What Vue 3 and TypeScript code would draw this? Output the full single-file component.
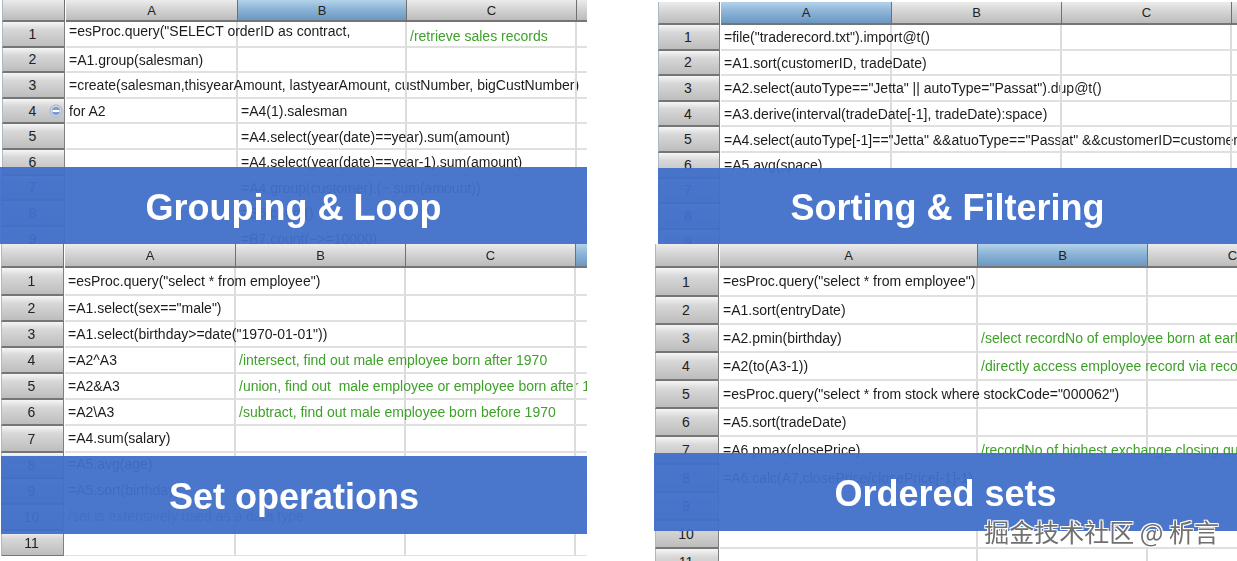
<script setup lang="ts">
interface Cell { text: string; low?: boolean; high?: boolean }
interface Panel {
  id: string
  title: string
  selected: number
  rows: (string | Cell)[][]
  minusRow?: number
}

const heads = ['A', 'B', 'C', '']

const panels: Panel[] = [
  {
    id: 'tl',
    title: 'Grouping & Loop',
    selected: 1,
    minusRow: 4,
    rows: [
      [{ text: '=esProc.query("SELECT orderID as contract,', high: true }, '', { text: '/retrieve sales records', low: true }],
      ['=A1.group(salesman)'],
      ['=create(salesman,thisyearAmount, lastyearAmount, custNumber, bigCustNumber)'],
      ['for A2', '=A4(1).salesman'],
      ['', '=A4.select(year(date)==year).sum(amount)'],
      ['', '=A4.select(year(date)==year-1).sum(amount)'],
      ['', '=A4.group(customer).(~.sum(amount))'],
      ['', '=B6.count()'],
      ['', '=B7.count(~>=10000)'],
    ],
  },
  {
    id: 'tr',
    title: 'Sorting & Filtering',
    selected: 0,
    rows: [
      ['=file("traderecord.txt").import@t()'],
      ['=A1.sort(customerID, tradeDate)'],
      ['=A2.select(autoType=="Jetta" || autoType="Passat").dup@t()'],
      ['=A3.derive(interval(tradeDate[-1], tradeDate):space)'],
      ['=A4.select(autoType[-1]=="Jetta" &&atuoType=="Passat" &&customerID=customerID[-1])'],
      ['=A5.avg(space)'],
      [],
      [],
      [],
    ],
  },
  {
    id: 'bl',
    title: 'Set operations',
    selected: 3,
    rows: [
      ['=esProc.query("select * from employee")'],
      ['=A1.select(sex=="male")'],
      ['=A1.select(birthday>=date("1970-01-01"))'],
      ['=A2^A3', '/intersect, find out male employee born after 1970'],
      ['=A2&A3', '/union, find out  male employee or employee born after 1970'],
      ['=A2\\A3', '/subtract, find out male employee born before 1970'],
      ['=A4.sum(salary)'],
      ['=A5.avg(age)'],
      ['=A5.sort(birthday)'],
      ['/set is extensively used as a data type'],
      [],
    ],
  },
  {
    id: 'br',
    title: 'Ordered sets',
    selected: 1,
    rows: [
      ['=esProc.query("select * from employee")'],
      ['=A1.sort(entryDate)'],
      ['=A2.pmin(birthday)', '/select recordNo of employee born at earliest date'],
      ['=A2(to(A3-1))', '/directly access employee record via recordNo'],
      ['=esProc.query("select * from stock where stockCode="000062")'],
      ['=A5.sort(tradeDate)'],
      ['=A6.pmax(closePrice)', '/recordNo of highest exchange closing quotation'],
      ['=A6.calc(A7,closePrice/closePrice[-1]-1)'],
      [],
      [],
      [],
    ],
  },
]

const cellAt = (row: (string | Cell)[], i: number): Cell => {
  const c = row[i]
  if (c === undefined) return { text: '' }
  return typeof c === 'string' ? { text: c } : c
}
const isNote = (c: Cell) => c.text.startsWith('/')
const find = (id: string) => panels.filter(p => p.id === id)
const columns = [
  [...find('tl'), ...find('bl')],
  [...find('tr'), ...find('br')],
]
</script>

<template>
  <div class="page">
    <div v-for="(col, ci) in columns" :key="ci" class="column">
      <section v-for="p in col" :key="p.id" class="panel" :class="p.id">
        <div class="sheet">
          <div class="head corner"></div>
          <div
            v-for="(h, i) in heads"
            :key="i"
            class="head"
            :class="{ selected: i === p.selected }"
          >{{ h }}</div>
          <template v-for="(row, r) in p.rows" :key="r">
            <div class="rowhead">
              {{ r + 1 }}
              <svg v-if="p.minusRow === r + 1" class="minus" viewBox="0 0 14 14" width="14" height="14">
                <circle cx="7" cy="7" r="6" fill="#c9d6ea" stroke="#9fb2cf" />
                <circle cx="7" cy="7" r="4" fill="#7f9cc8" />
                <rect x="3.5" y="6" width="7" height="2" fill="#fff" />
              </svg>
            </div>
            <div
              v-for="i in 4"
              :key="i"
              class="cell"
              :class="{ note: isNote(cellAt(row, i - 1)), low: cellAt(row, i - 1).low, high: cellAt(row, i - 1).high }"
            >{{ cellAt(row, i - 1).text }}</div>
          </template>
        </div>
        <div class="banner"><h2>{{ p.title }}</h2></div>
      </section>
    </div>
    <div class="watermark">掘金技术社区 @ 析言</div>
  </div>
</template>

<style scoped>
.page {
  position: relative;
  display: flex;
  width: 1237px;
  height: 561px;
  overflow: hidden;
  background: #fff;
  font-family: "Liberation Sans", Arial, sans-serif;
}
.column {
  display: flex;
  flex-direction: column;
}
.column:first-child {
  width: 654px;
}
.column:last-child {
  width: 583px;
}
.panel {
  position: relative;
  overflow: hidden;
  flex: none;
}
.tl, .tr {
  height: 244px;
}
.bl, .br {
  height: 317px;
}
.tl { width: 587px; padding-left: 2px; box-sizing: border-box; }
.tr { width: 579px; margin-left: 4px; padding-top: 2px; box-sizing: border-box; }
.bl { width: 586px; margin-left: 1px; }
.br { width: 583px; padding-left: 1px; box-sizing: border-box; }

.sheet {
  display: grid;
  background: #fff;
  color: #1c1c1c;
  font-size: 14px;
  filter: blur(0.35px);
}
.tl .sheet {
  grid-template-columns: 64px 172px 169px 170px 30px;
  grid-template-rows: 22px;
  grid-auto-rows: 25.6px;
}
.tr .sheet {
  grid-template-columns: 63px 171px 170px 170px 30px;
  grid-template-rows: 23px;
  grid-auto-rows: 25.6px;
}
.bl .sheet {
  grid-template-columns: 64px 171px 170px 170px 30px;
  grid-template-rows: 24px 28px;
  grid-auto-rows: 26.1px;
  height: 312px;
  overflow: hidden;
}
.br .sheet {
  grid-template-columns: 65px 258px 170px 170px 20px;
  grid-template-rows: 24px 29px;
  grid-auto-rows: 28px;
}

.head {
  display: flex;
  align-items: center;
  justify-content: center;
  box-sizing: border-box;
  background: linear-gradient(#ececec, #d4d4d4 45%, #bcbcbc);
  border-right: 1px solid #707070;
  border-bottom: 2px solid #757575;
  color: #222;
  font-size: 13px;
  overflow: hidden;
}
.head.corner {
  margin-right: 1px;
  border-left: 1px solid #aeb8c6;
}
.head.selected {
  background: linear-gradient(#b3d3ea, #8cb4d6 45%, #6b98c2);
}
.rowhead {
  position: relative;
  display: flex;
  align-items: center;
  justify-content: center;
  box-sizing: border-box;
  margin-right: 1px;
  padding-right: 2px;
  background: linear-gradient(#f6f6f6, #d8d8d8 30%, #bdbdbd);
  border-left: 1px solid #aeb8c6;
  border-right: 1px solid #808080;
  border-bottom: 2px solid #757575;
  color: #222;
  font-size: 14px;
}
.minus {
  position: absolute;
  right: 1px;
  top: 5px;
}
.cell {
  display: flex;
  align-items: center;
  box-sizing: border-box;
  min-width: 0;
  padding: 1px 0 0 3px;
  border-right: 2px solid #dcdcdc;
  border-bottom: 2px solid #e0e0e0;
  white-space: pre;
  overflow: visible;
}
.bl .cell, .br .cell {
  padding: 0 0 1px 3px;
}
.note {
  color: #3ea12a;
}
.cell.low {
  padding-top: 5px;
}
.cell.high {
  padding-bottom: 6px;
}

.banner {
  position: absolute;
  display: flex;
  align-items: center;
  justify-content: center;
  box-sizing: border-box;
  padding-top: 4px;
  left: 0;
  right: 0;
  background: rgba(64, 111, 201, 0.95);
}
.tl .banner { top: 167px; height: 77px; }
.tr .banner { top: 168px; height: 76px; }
.bl .banner { top: 212px; height: 78px; }
.br .banner { top: 209px; height: 78px; }
.banner h2 {
  margin: 0;
  color: #fff;
  font-size: 36px;
  font-weight: 700;
  line-height: 1;
  filter: blur(0.3px);
}
.watermark {
  position: absolute;
  right: 18px;
  bottom: 15px;
  color: #707070;
  font-family: "Noto Sans CJK SC", "Liberation Sans", sans-serif;
  font-size: 25px;
  line-height: 1.2;
  text-shadow: 1px 1px 0 #fff, -1px -1px 0 #fff, 1px -1px 0 #fff, -1px 1px 0 #fff;
}
</style>
